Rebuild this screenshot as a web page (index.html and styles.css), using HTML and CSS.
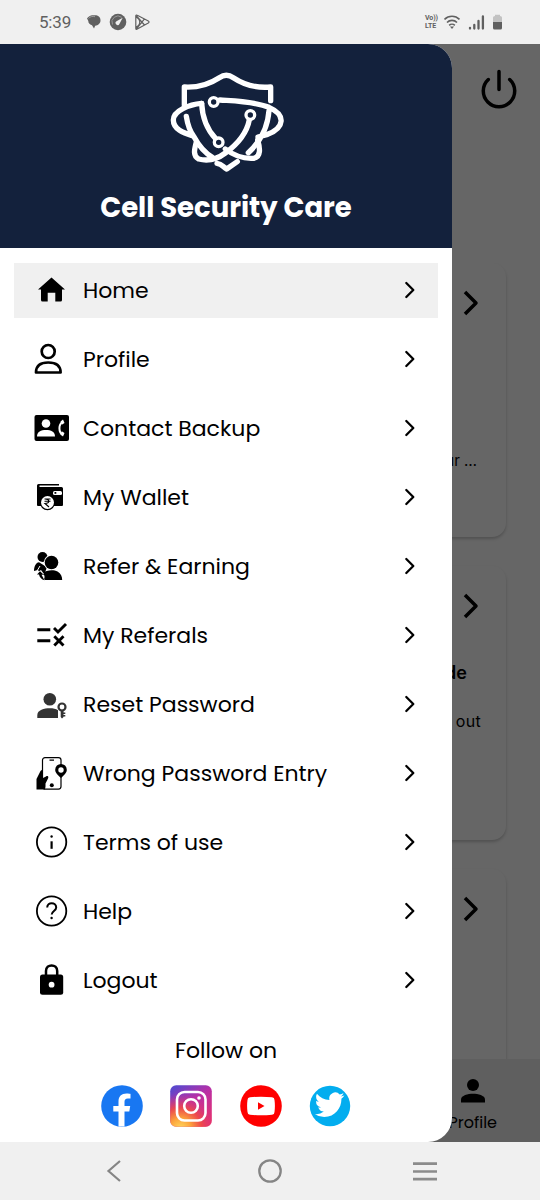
FILE: index.html
```html
<!DOCTYPE html>
<html lang="en">
<head>
<meta charset="utf-8">
<title>Cell Security Care</title>
<link rel="stylesheet" href="styles.css">
</head>
<body>
<svg class="defs" width="0" height="0">
  <symbol id="chevron" viewBox="0 0 12 18"><path d="M2.300 2l7 7-7 7" fill="none" stroke="#000" stroke-width="2.300" stroke-linecap="round" stroke-linejoin="round"/></symbol>
  <symbol id="big-chevron" viewBox="0 0 16 26"><path d="M2 2l11 11L2 24" fill="none" stroke="#000" stroke-width="3.500" stroke-linejoin="round"/></symbol>
</svg>

<header class="status">
  <span class="clock">5:39</span>
  <svg class="status-left" width="66" height="20" viewBox="0 0 66 20">
    <path d="M3 4.500C5 2.500 9 3.300 9 3.300c3 0 5.500 1.500 5.500 5 0 3.300-2.400 5.200-5.300 5.400L8 16.500l-2-3.300C3.500 12.500 2.300 11 2.300 9L1 6.300z" fill="#606060"/>
    <path d="M2.500 6.500C4 4.300 7 4.200 9 4.700" fill="none" stroke="#aaa" stroke-width=".8"/>
    <circle cx="32" cy="10" r="8.300" fill="#606060"/>
    <path d="M26.500 12.500a6 6 0 0 1 9.200-7.200" fill="none" stroke="#999" stroke-width="1"/>
    <path d="M36.700 5.800l-3.300 6.100a2 2 0 1 1-2.900-2.600z" fill="#f0f0f0"/>
    <path d="M49.800 3.800v12.700c0 1 .8 1 1.500.6l11-6c1-.6 1-1.500 0-2.100l-11-5.700c-.7-.4-1.500-.3-1.500.5zM50.500 4l8 9M50.500 16.800l8-10M50 5c5 2.500 5 7.500 0 10.500" fill="none" stroke="#606060" stroke-width="1.200"/>
  </svg>
  <span class="volte"><span>Vo))</span><span>LTE</span></span>
  <svg class="status-right" width="60" height="20" viewBox="0 0 60 20">
    <g fill="none" stroke="#606060" stroke-width="1.600"><path d="M.5 7.400a10.500 10.500 0 0 1 15 0M3 10.500a7 7 0 0 1 10 0M5.200 13.400a4 4 0 0 1 5.600 0"/></g>
    <path d="M6 14.500l2 2.400 2-2.400z" fill="#606060"/>
    <path d="M26 16.500v-.7M30.300 16.500v-3.500M34.500 16.500v-7.500M38.900 16.500V4.500" stroke="#606060" stroke-width="2.300" stroke-linecap="round"/>
    <path d="M49 10V5.500Q49 4 51 4v-1.200h5V4q2 0 2 1.500V10z" fill="#c2c2c2"/>
    <path d="M49 10h9v6q0 1.500-1.500 1.500h-6q-1.500 0-1.500-1.500z" fill="#606060"/>
  </svg>
</header>

<main class="stage">
  <section class="app">
    <div class="app-bar">
      <svg width="38" height="42" viewBox="0 0 38 42" fill="none" stroke="#000" stroke-width="3.500" stroke-linecap="round"><path d="M19 3.500v18M8.300 11.500a15.700 15.700 0 1 0 21.400 0"/></svg>
    </div>
    <div class="cards">
      <article class="card"><svg class="go" width="16" height="26"><use href="#big-chevron"/></svg><p class="card-note first">ur …</p></article>
      <article class="card"><svg class="go" width="16" height="26"><use href="#big-chevron"/></svg><h2 class="card-title">de</h2><p class="card-note">out</p></article>
      <article class="card"><svg class="go" width="16" height="26"><use href="#big-chevron"/></svg></article>
    </div>
    <div class="tabs">
      <div class="tab">
        <svg width="24" height="24" viewBox="0 0 24 24"><circle cx="12" cy="6" r="6"/><path d="M0 23.500v-3c0-4 7-5.700 12-5.700s12 1.700 12 5.700v3z"/></svg>
        <span>Profile</span>
      </div>
    </div>
  </section>

  <aside class="drawer">
    <div class="brand">
      <svg class="logo" width="130" height="115" viewBox="0 0 390 345" fill="none" stroke="#fff" stroke-width="16" stroke-linecap="round" stroke-linejoin="round">
        <path d="M70 120V66C105 68 140 61 175 38Q196 24 217 38C252 61 288 70 329 66V107" />
        <path d="M177 105C220 108 280 109 324 127C376 150 370 188 320 208L291 216M324 137C320 190 298 230 262 263"/>
        <path d="M122 115C85 118 37 137 37 165C37 193 66 203 98 214C112 240 128 262 154 277M76 154C80 180 88 200 98 214"/>
        <path d="M122 115C124 158 138 193 164 221"/>
        <path d="M265 164C257 206 226 240 193 264C164 286 133 287 113 282C93 273 102 248 106 231"/>
        <path d="M193 252C219 272 248 282 278 280C301 276 297 248 290 225M168 295C184 297 186 307 197 312L229 290"/>
        <g stroke-width="10" fill="#13213c"><circle cx="158" cy="111" r="13"/><circle cx="268" cy="150" r="13"/><circle cx="173" cy="232" r="13"/></g>
      </svg>
      <h1>Cell Security Care</h1>
    </div>

    <nav class="menu">
      <a class="item active"><svg class="icon" viewBox="0 0 40 40"><path d="M20.500 7.500L34 19.500h-3V30q0 1.500-1.500 1.500h-5.200v-8.800h-7.600v8.800h-5.200Q10 31.500 10 30V19.500H7z"/></svg><span>Home</span><svg class="arrow"><use href="#chevron"/></svg></a>
      <a class="item"><svg class="icon" viewBox="0 0 40 40" fill="none" stroke="#000" stroke-width="2.700" stroke-linejoin="round"><circle cx="17.200" cy="12.500" r="6.500"/><path d="M5 33.500C5 26.500 9 23.500 17.200 23.500S29.600 26.500 29.600 33.500z"/></svg><span>Profile</span><svg class="arrow"><use href="#chevron"/></svg></a>
      <a class="item"><svg class="icon" viewBox="0 0 40 40"><rect x="3.500" y="7" width="34.500" height="26" rx="2"/><g fill="#fff"><circle cx="15" cy="15.500" r="4.300"/><path d="M6 28.500c0-5 4-6.500 9-6.500s9 1.500 9 6.500z"/></g><path d="M31.800 13.500c-4.500 3-4.500 10.500 0 13.500" fill="none" stroke="#fff" stroke-width="2"/><path d="M29.500 13.500l2.500-2 1.500 3.500-2.700 1.700zM29.500 26.500l2.500 2 1.500-3.500-2.700-1.700z" fill="#fff"/></svg><span>Contact Backup</span><svg class="arrow"><use href="#chevron"/></svg></a>
      <a class="item"><svg class="icon" viewBox="0 0 40 40"><path d="M6 8.500Q6 7 7.500 7H28v1.500H8.500V10h22q1.500 0 1.500 1.500V28q0 1-1 1H7q-1 0-1-1z"/><rect x="22" y="14" width="9" height="4" rx="1.500" fill="#fff"/><rect x="23.500" y="15" width="1.800" height="1.800"/><circle cx="16.500" cy="25.500" r="7.700"/><circle cx="16.500" cy="25.500" r="6.500" fill="#fff"/><path d="M13.500 22h6M13.500 24.200h6M14 22c5 0 5 4.500 0 4.500l4 3.500" fill="none" stroke="#000" stroke-width="1.100"/></svg><span>My Wallet</span><svg class="arrow"><use href="#chevron"/></svg></a>
      <a class="item"><svg class="icon" viewBox="0 0 40 40"><circle cx="11.500" cy="11" r="5"/><path d="M3 25c0-4.500 2-8.500 5-8.800l8 5-3 7.800-4-2-2-3z"/><path d="M6 25l3-5" stroke="#fff" stroke-width="1"/><circle cx="20.500" cy="16.500" r="7.700" fill="#fff"/><circle cx="20.500" cy="16.500" r="6.800"/><path d="M12.500 34c2-3 1-5-1-7 4-3 11-3.500 15-1.500 3.500 2 4.700 5 4.700 8.500z"/><path d="M5 27l5-3 3 4-2 1 3 5.500-3 .5-5-5z" fill="#fff"/><path d="M6 28.500l3-3.300 3.500 3.300-2 .3 3 5.400c-3-.7-5-3-5.500-5.700z"/></svg><span>Refer &amp; Earning</span><svg class="arrow"><use href="#chevron"/></svg></a>
      <a class="item"><svg class="icon" viewBox="0 0 40 40" fill="none" stroke="#000" stroke-width="2.900"><path d="M6.300 14.700h13M6.300 25.800h13M23 13l4 4 8-8M23.300 21.300l9.200 9.200M32.500 21.300l-9.200 9.200"/></svg><span>My Referals</span><svg class="arrow"><use href="#chevron"/></svg></a>
      <a class="item"><svg class="icon" viewBox="0 0 40 40" fill="#333"><circle cx="18.800" cy="15.200" r="6.300"/><path d="M6.300 34v-3c0-5 7-6.700 12.500-6.700 3.500 0 6 .5 8.200 2V34z"/><circle cx="31" cy="23" r="3.500" fill="#fff" stroke="#333" stroke-width="2.200"/><path d="M29.700 26.500h2.800v6.500L31 34.500 29.700 33zM32.500 28.500h1.800v1.500h-1.800zM32.500 31h1.800v1.500h-1.800z"/></svg><span>Reset Password</span><svg class="arrow"><use href="#chevron"/></svg></a>
      <a class="item"><svg class="icon" viewBox="0 0 40 40"><rect x="11.500" y="4.600" width="18.500" height="31.500" rx="2.500" fill="#fff" stroke="#000" stroke-width="1.200"/><path d="M18.500 6.500h4.500v1.200h-4.500zM5.500 36.500V26L9.500 18l2.500-2v9l3-1.500c1.500-1 3 0 2 2l-2.500 5v3L14 36.500z"/><circle cx="20.800" cy="32.300" r="2"/><path d="M30 25c-4-4-5.800-5.500-5.800-8.300a5.800 5.800 0 0 1 11.600 0c0 2.800-1.800 4.300-5.800 8.300z"/><circle cx="30" cy="17" r="2.700" fill="#fff"/></svg><span>Wrong Password Entry</span><svg class="arrow"><use href="#chevron"/></svg></a>
      <a class="item"><svg class="icon" viewBox="0 0 40 40" fill="none" stroke="#000" stroke-width="1.800"><circle cx="20.600" cy="20" r="14.700"/><path d="M20.600 19.300v7.500" stroke-width="2.200"/><circle cx="20.600" cy="14.500" r="1.200" fill="#000" stroke="none"/></svg><span>Terms of use</span><svg class="arrow"><use href="#chevron"/></svg></a>
      <a class="item"><svg class="icon" viewBox="0 0 40 40" fill="none" stroke="#000" stroke-width="1.800"><circle cx="20.600" cy="20" r="14.700"/><path d="M16.200 16.500c0-5.800 9-5.800 9 0 0 3.500-4.500 3.500-4.500 7" stroke-width="2"/><circle cx="20.600" cy="27" r="1.200" fill="#000" stroke="none"/></svg><span>Help</span><svg class="arrow"><use href="#chevron"/></svg></a>
      <a class="item"><svg class="icon" viewBox="0 0 40 40"><rect x="9" y="14.500" width="23.200" height="20.300" rx="2.500"/><path d="M15 15v-4c0-7.500 11.200-7.500 11.200 0v4" fill="none" stroke="#000" stroke-width="2.500"/><circle cx="20.600" cy="24.700" r="2.900" fill="#fff"/></svg><span>Logout</span><svg class="arrow"><use href="#chevron"/></svg></a>
    </nav>

    <div class="follow">
      <p>Follow on</p>
      <div class="social">
        <svg viewBox="0 0 42 42"><circle cx="21" cy="21" r="20.800" fill="#1877f2"/><path d="M17.500 41.500V26.500h-5.200V21h5.200v-4.300c0-5.500 3-8.200 8-8.200 2 0 4 .4 4 .4v4.700h-2.700c-2.400 0-3.300 1.500-3.300 3.200V21h5.700l-.9 5.500h-4.800v15z" fill="#fff"/></svg>
        <svg viewBox="0 0 42 42"><defs><linearGradient id="ig" x1=".2" y1="0" x2=".8" y2="1"><stop offset="0" stop-color="#5b47cc"/><stop offset=".4" stop-color="#b92fa6"/><stop offset="1" stop-color="#e8306b"/></linearGradient><radialGradient id="glow" cx=".25" cy="1.050" r=".85"><stop offset="0" stop-color="#ffdc60"/><stop offset=".3" stop-color="#fca33c"/><stop offset=".6" stop-color="#f04b45" stop-opacity=".9"/><stop offset="1" stop-color="#d0308b" stop-opacity="0"/></radialGradient></defs><rect x=".2" y=".2" width="41.600" height="41.600" rx="6" fill="url(#ig)"/><rect x=".2" y=".2" width="41.600" height="41.600" rx="6" fill="url(#glow)"/><g fill="none" stroke="#fff" stroke-width="2.600"><rect x="7" y="7" width="28.500" height="28.500" rx="7.500"/><circle cx="21" cy="21" r="6.800"/></g><circle cx="29" cy="13" r="1.800" fill="#fff"/></svg>
        <svg viewBox="0 0 42 42"><circle cx="21" cy="21" r="20.800" fill="#f00"/><path d="M10 12.300q11-1.200 22 0 2.500.3 2.500 2.800.8 5.900 0 11.800 0 2.500-2.500 2.800-11 1.200-22 0-2.500-.3-2.500-2.800-.8-5.900 0-11.800 0-2.500 2.500-2.800z" fill="#fff"/><path d="M18 17.300v7.400l6.500-3.700z" fill="#f00"/></svg>
        <svg viewBox="0 0 42 42"><circle cx="21" cy="21" r="20.200" fill="#03adef"/><path transform="translate(5.900 4.700) scale(1.230 1.250)" d="M23.950 4.570a10 10 0 0 1-2.820.77 4.960 4.960 0 0 0 2.160-2.720c-.95.550-2 .950-3.130 1.180a4.920 4.920 0 0 0-8.380 4.480C7.690 8.090 4.070 6.130 1.640 3.160a4.920 4.920 0 0 0 1.520 6.570 4.900 4.900 0 0 1-2.230-.61v.06a4.920 4.920 0 0 0 3.950 4.830 5 5 0 0 1-2.210.08 4.930 4.930 0 0 0 4.600 3.420A9.870 9.870 0 0 1 0 19.540a14 14 0 0 0 7.550 2.210c9.050 0 14-7.500 14-13.980 0-.21 0-.42-.02-.63a9.940 9.940 0 0 0 2.460-2.550z" fill="#fff"/></svg>
      </div>
    </div>
  </aside>
</main>

<footer class="system">
  <svg width="16" height="24" viewBox="0 0 16 24"><path d="M14 2L2.500 12 14 22" fill="none" stroke="#858585" stroke-width="2.200"/></svg>
  <svg width="24" height="24" viewBox="0 0 24 24"><circle cx="12" cy="12" r="10.700" fill="none" stroke="#858585" stroke-width="2.300"/></svg>
  <svg width="24" height="24" viewBox="0 0 24 24"><path d="M0 4.700h24M0 12.500h24M0 20.200h24" stroke="#8b8b8b" stroke-width="2.700"/></svg>
</footer>
</body>
</html>
```
FILE: styles.css
```css
* { box-sizing: border-box; margin: 0; padding: 0; }

body {
  width: 540px;
  height: 1200px;
  overflow: hidden;
  display: flex;
  flex-direction: column;
  font-family: Poppins, Inter, "Open Sans", sans-serif;
  color: #000;
  background: #f0f0f0;
}

svg { display: block; flex: none; }
.defs { position: absolute; }

/* System status bar */
.status {
  height: 44px;
  display: flex;
  align-items: center;
  padding: 0 37px 0 39px;
  color: #606060;
  font-family: Roboto, sans-serif;
}
.clock { width: 47px; font-size: 17px; letter-spacing: -0.2px; }
.status-left { margin-right: auto; }
.volte { display: flex; flex-direction: column; width: 14px; margin-right: 5px; font-size: 7px; line-height: 8px; font-weight: 700; letter-spacing: -0.1px; white-space: nowrap; }
.status-right { margin-right: -1px; }

/* Screen area: dimmed app with the drawer above it */
.stage { height: 1098px; display: grid; overflow: hidden; }
.app, .drawer { grid-area: 1 / 1; }

.app {
  display: flex;
  flex-direction: column;
  height: 1098px;
  background: #666;
}
.app-bar { height: 219px; flex: none; display: flex; justify-content: flex-end; padding: 24px 22px 0 0; }
.cards { flex: 1; min-height: 0; overflow: hidden; display: flex; flex-direction: column; gap: 29px; padding-right: 34px; }
.card {
  flex: none;
  height: 274px;
  padding: 27px 25px 0 0;
  display: flex;
  flex-direction: column;
  align-items: flex-end;
  border-radius: 0 14px 14px 0;
  box-shadow: 0 2px 3px rgba(0, 0, 0, 0.2);
}
.card .go { margin-right: 2px; }
.card-title { margin: 41px 14px 0 0; font: 600 18px/26px Inter, sans-serif; }
.card-note { margin-top: 22px; font: 16px/26px Inter, sans-serif; letter-spacing: 0.3px; }
.card-note.first { margin: 132px 4px 0 0; font-size: 15px; letter-spacing: 0; }
.tabs { height: 83px; flex: none; display: flex; justify-content: flex-end; padding: 20px 43px 0 0; background: #5f5f5f; }
.tab { display: flex; flex-direction: column; align-items: center; gap: 9px; font-size: 16px; line-height: 22px; }

.drawer {
  width: 452px;
  height: 1098px;
  display: flex;
  flex-direction: column;
  overflow: hidden;
  border-radius: 0 24px 24px 0;
  background: #fff;
}
.brand {
  height: 204px;
  flex: none;
  display: flex;
  flex-direction: column;
  align-items: center;
  padding-top: 21px;
  background: #13213c;
  color: #fff;
}
.logo { margin-right: 1px; }
h1 { margin-top: 10px; font-size: 27.5px; line-height: 36px; font-weight: 700; white-space: nowrap; }

.menu { display: flex; flex-direction: column; gap: 14px; padding: 14.5px 14px 0; }
.item { height: 55px; display: flex; align-items: center; padding: 0 22px 0 17px; font-size: 22px; white-space: nowrap; }
.item.active { background: #f0f0f0; }
.icon { width: 40px; height: 40px; margin: 0 12px 0 0; }
.item span { margin-top: 1px; }
.arrow { width: 12px; height: 18px; margin: 0 0 0 auto; }

.follow { display: flex; flex-direction: column; align-items: center; padding-top: 30.5px; font-size: 22px; line-height: 26px; }
.social { display: flex; gap: 27.5px; margin-top: 21px; }
.social svg { width: 42px; height: 42px; }

/* System navigation bar */
.system { height: 58px; display: grid; grid-template-columns: 120px 192px 1fr; align-items: center; justify-items: end; padding: 0 103px 0 2px; }
.system svg:nth-child(2) { margin-right: 32px; }
```
